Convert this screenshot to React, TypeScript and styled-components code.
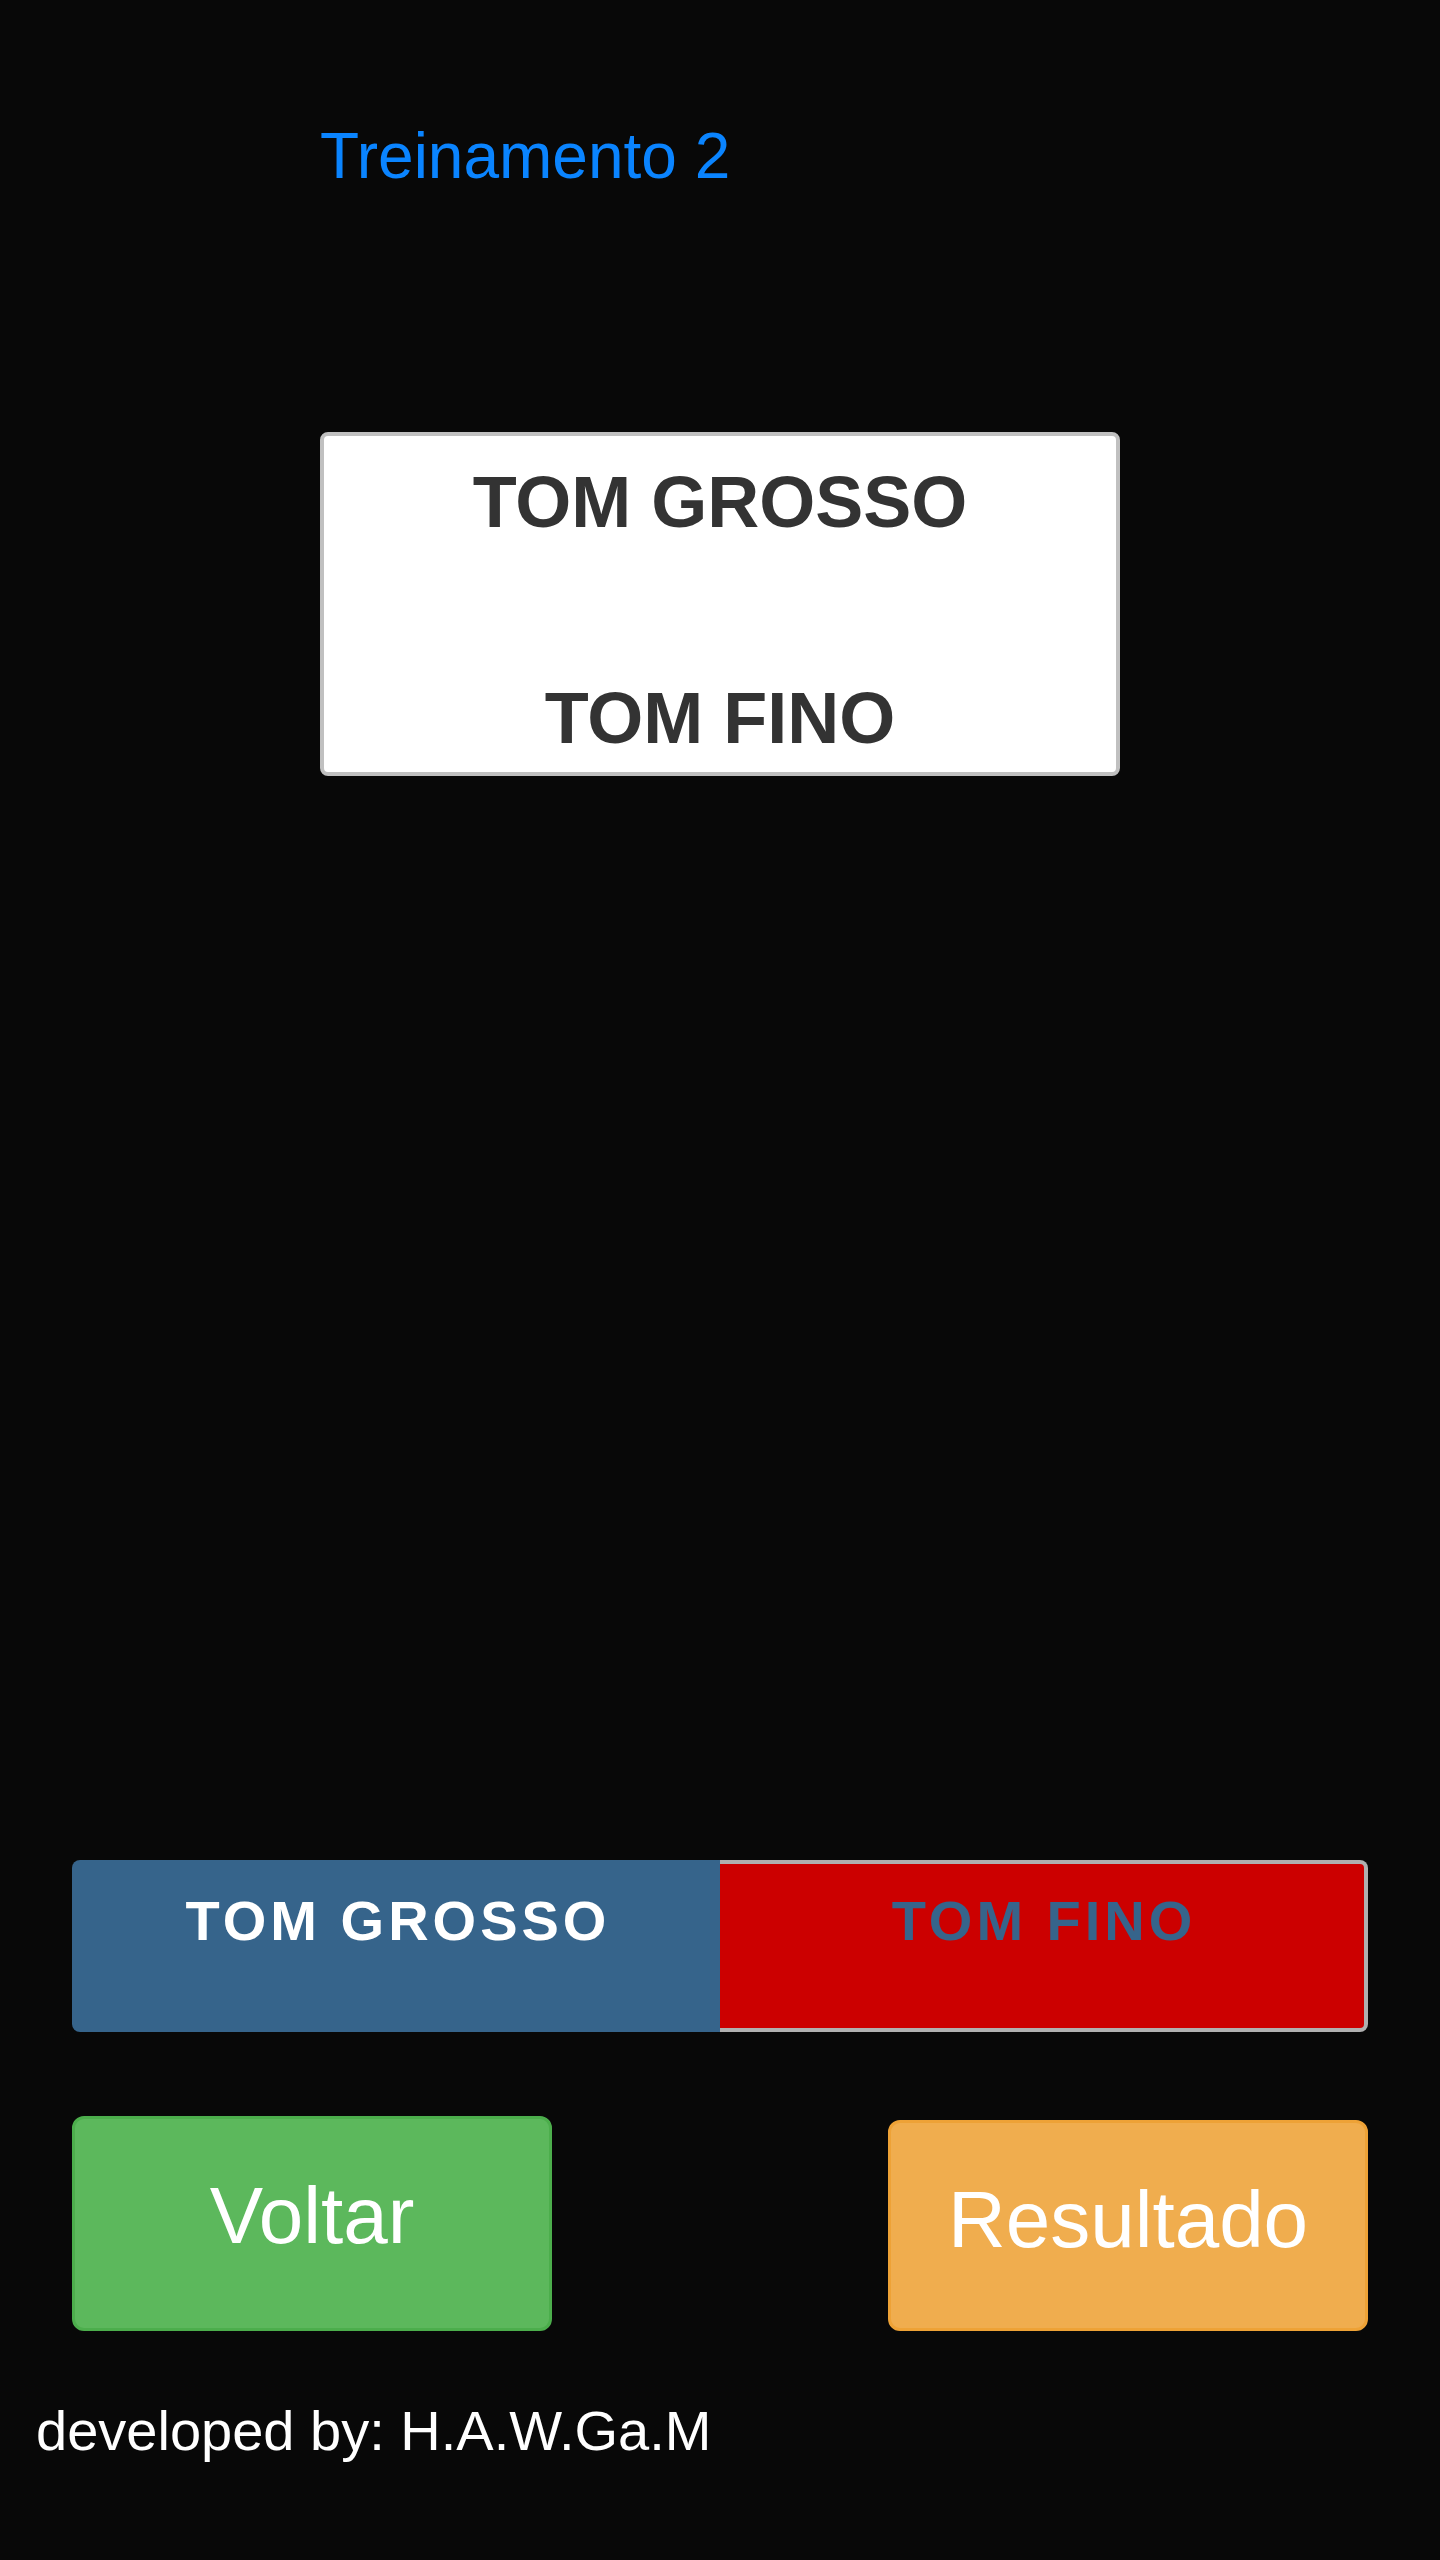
import React from "react";
import styled, { createGlobalStyle } from "styled-components";

const GlobalStyle = createGlobalStyle`
  html, body {
    margin: 0;
    padding: 0;
    background: #080808;
  }
  body {
    font-family: "Liberation Sans", Arial, sans-serif;
  }
  * { box-sizing: border-box; }
`;

const Page = styled.div`
  min-height: 2560px;
  background: #080808;
  padding-top: 119px;
  display: flex;
  flex-direction: column;
`;

const Header = styled.div`
  width: 800px;
  margin: 0 auto;
`;

const Title = styled.h1`
  margin: 0;
  font-size: 64px;
  font-weight: 400;
  line-height: normal;
  color: #0a84ff;
`;

const Display = styled.div`
  margin-top: 239px;
  border: 4px solid #c0c0c0;
  border-radius: 8px;
  background: #ffffff;
  padding-top: 12px;
  text-align: center;
  font-size: 72px;
  font-weight: 700;
  line-height: 108px;
  color: #333333;
`;

const Toggle = styled.div`
  margin: 1084px 72px 0;
  height: 172px;
  display: flex;
`;

const ToggleHalf = styled.div<{ $active: boolean; $side: "left" | "right" }>`
  flex: 0 0 50%;
  text-align: center;
  font-size: 56px;
  font-weight: 700;
  letter-spacing: 4px;
  line-height: normal;
  padding-top: ${(p) => (p.$active ? "28px" : "24px")};
  padding-left: 4px;
  background: ${(p) => (p.$active ? "#36648b" : "#cc0000")};
  color: ${(p) => (p.$active ? "#ffffff" : "#36648b")};
  border: ${(p) => (p.$active ? "none" : "4px solid #b0b0b0")};
  border-left: none;
  border-radius: ${(p) => (p.$side === "left" ? "8px 0 0 8px" : "0 8px 8px 0")};
`;

const ButtonRow = styled.div`
  margin: 84px 72px 0;
  display: flex;
  justify-content: space-between;
  align-items: flex-end;
`;

const ActionButton = styled.button<{ $bg: string; $border: string; $h: number }>`
  width: 480px;
  height: ${(p) => p.$h}px;
  background: ${(p) => p.$bg};
  border: 3px solid ${(p) => p.$border};
  border-radius: 12px;
  color: #ffffff;
  font-family: "Liberation Sans", Arial, sans-serif;
  font-size: 80px;
  line-height: normal;
  padding: 51px 0 0;
  display: flex;
  justify-content: center;
  align-items: flex-start;
  cursor: pointer;
`;

const Footer = styled.div`
  margin-top: 67px;
  padding-left: 36px;
  font-size: 56px;
  line-height: normal;
  color: #ffffff;
`;

export default function App() {
  return (
    <>
      <GlobalStyle />
      <Page>
        <Header>
          <Title>Treinamento 2</Title>
          <Display>
            TOM GROSSO
            <br />
            <br />
            TOM FINO
          </Display>
        </Header>
        <Toggle>
          <ToggleHalf $active={true} $side="left">TOM GROSSO</ToggleHalf>
          <ToggleHalf $active={false} $side="right">TOM FINO</ToggleHalf>
        </Toggle>
        <ButtonRow>
          <ActionButton $bg="#5cb85c" $border="#4cae4c" $h={215}>Voltar</ActionButton>
          <ActionButton $bg="#f0ad4e" $border="#eea236" $h={211}>Resultado</ActionButton>
        </ButtonRow>
        <Footer>developed by: H.A.W.Ga.M</Footer>
      </Page>
    </>
  );
}
